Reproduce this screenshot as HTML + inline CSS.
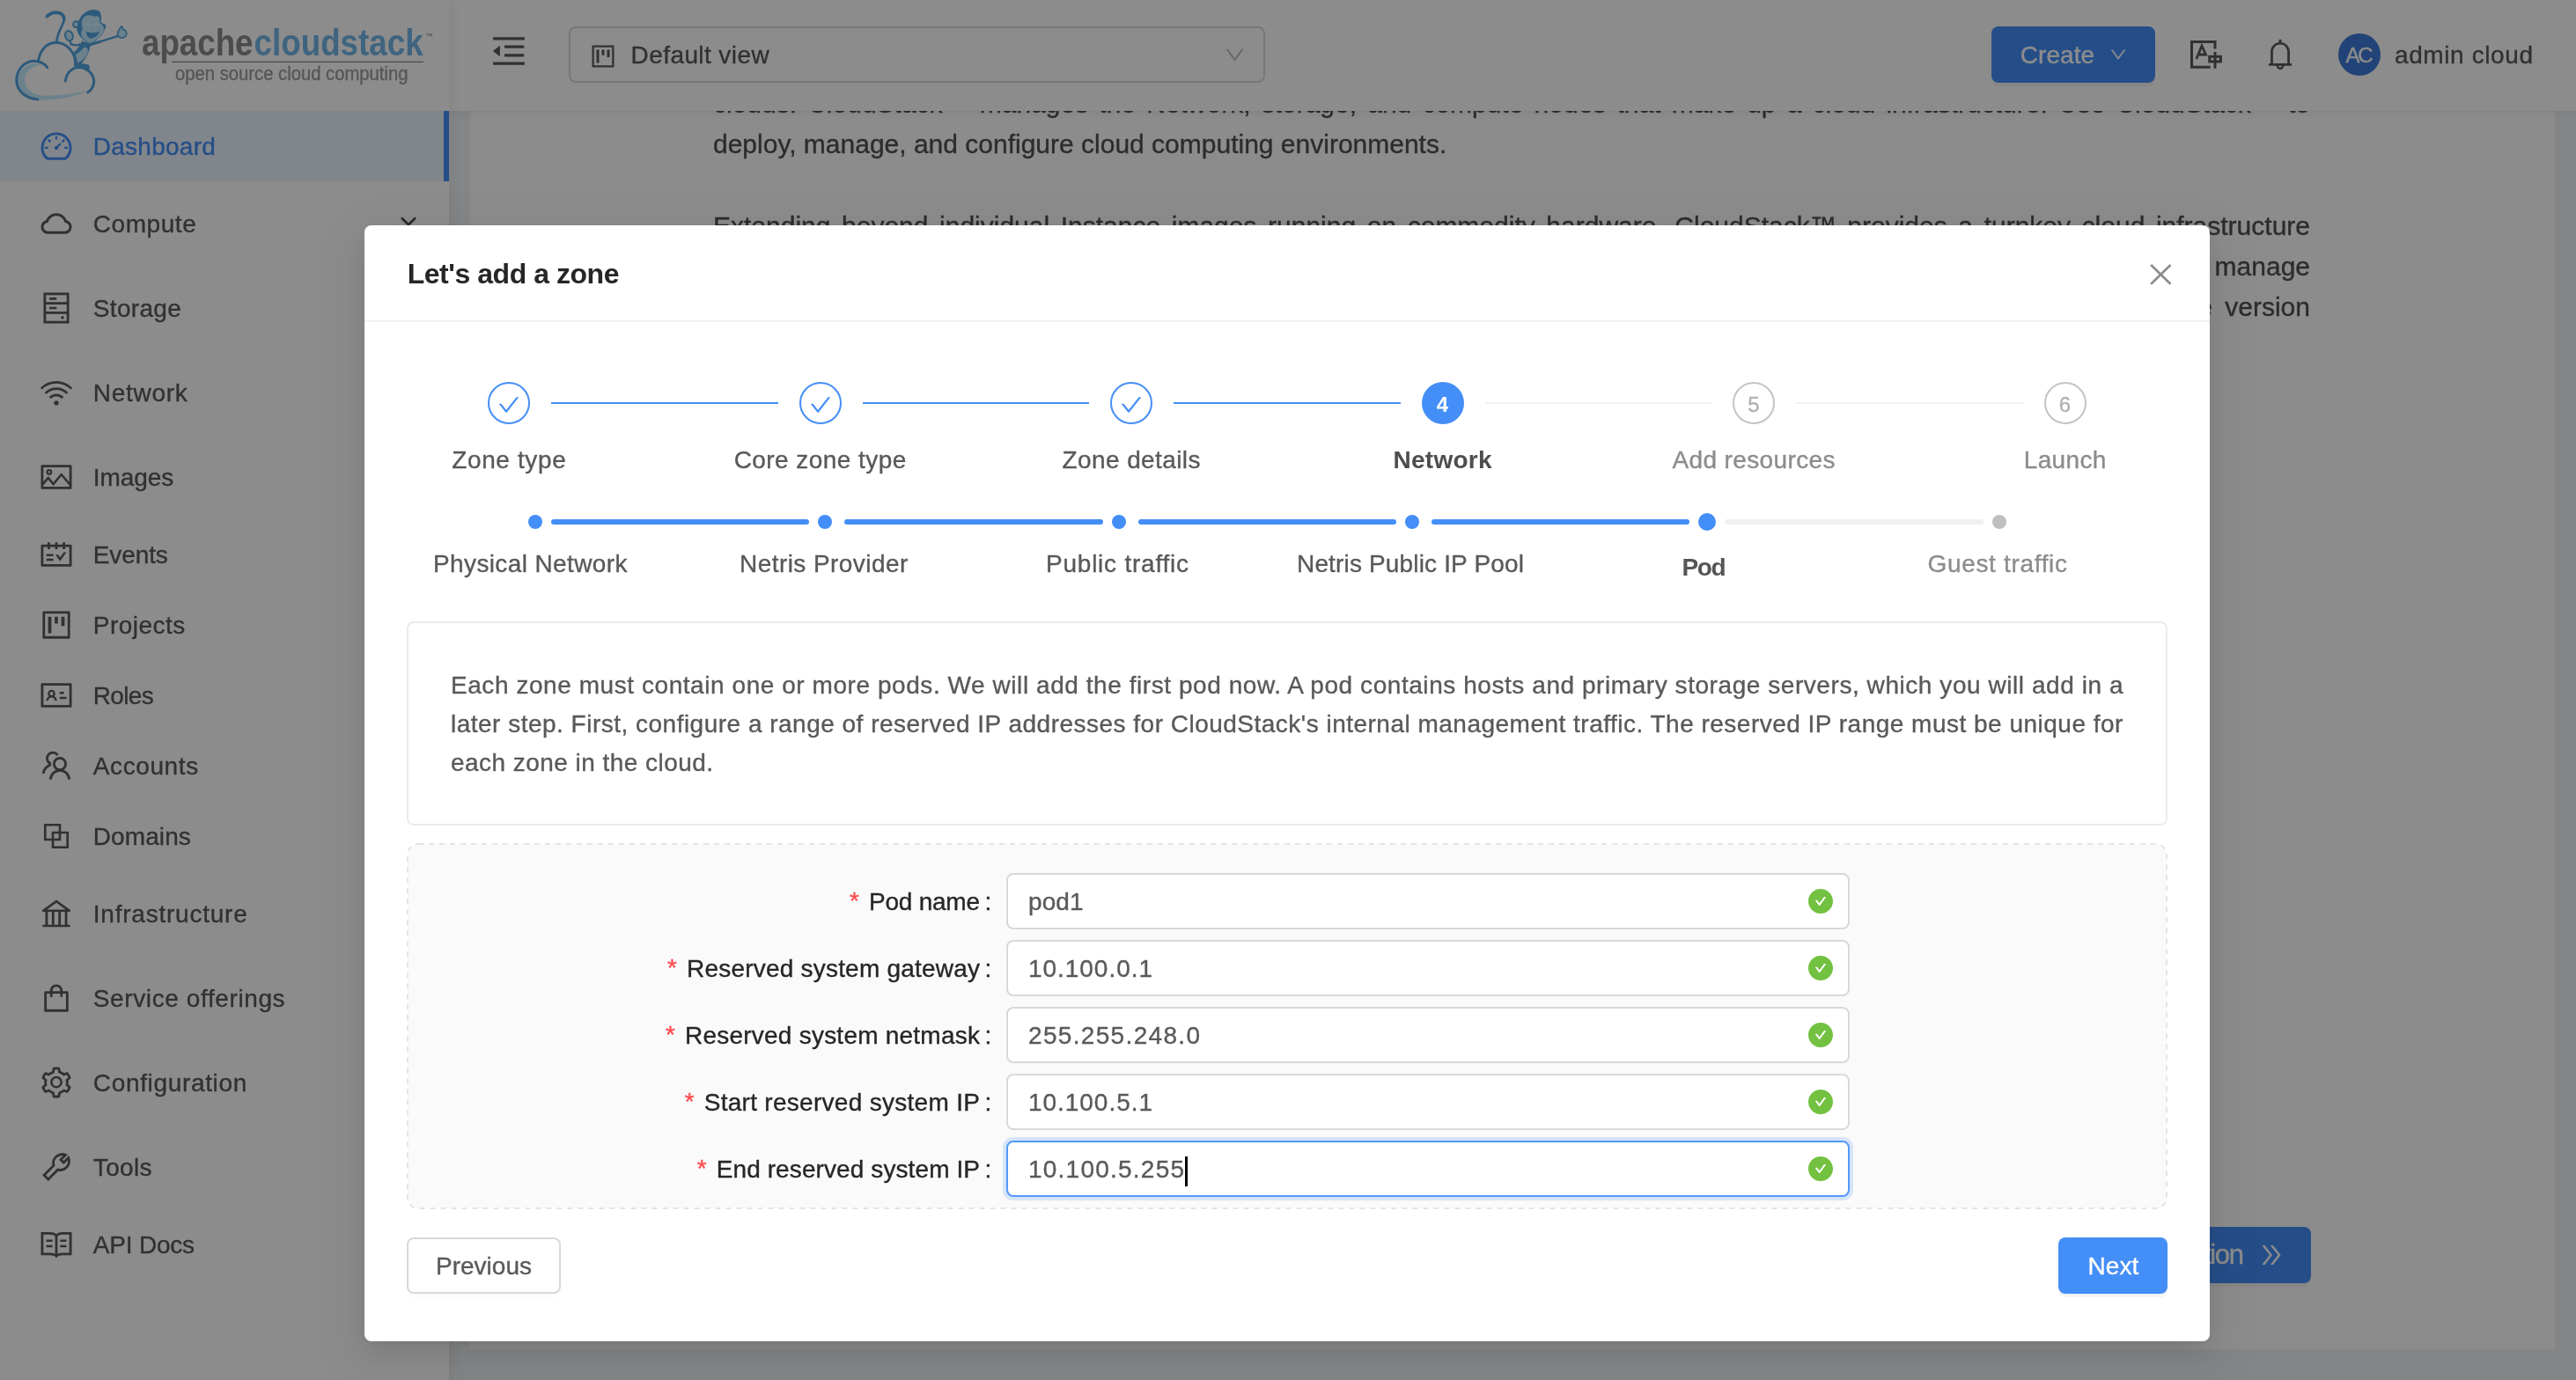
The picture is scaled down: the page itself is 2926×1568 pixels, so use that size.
<!DOCTYPE html>
<html lang="en"><head><meta charset="utf-8"><title>Apache CloudStack</title>
<style>

*{box-sizing:border-box}
html,body{margin:0;padding:0}
body{width:2926px;height:1568px;overflow:hidden;position:relative;background:#f0f2f5;font-family:"Liberation Sans",sans-serif;-webkit-font-smoothing:antialiased}
#app,#mask,#modal{position:absolute;left:0;top:0;width:2926px;height:1568px;overflow:hidden}
#mask{background:rgba(0,0,0,.45)}
#app,#modal{will-change:transform}
#app div,#app svg,#modal div,#modal svg{position:absolute}
.t{white-space:pre;-webkit-text-stroke:0.35px currentColor}
#content{left:534px;top:126px;width:2368px;height:1407px;background:#fff;overflow:hidden}
#content p{position:absolute;margin:0;left:276px;width:1814px;font-size:30px;line-height:46px;color:#505050;text-align:justify;-webkit-text-stroke:0.35px currentColor}
#content p span{font-size:24px}
#sider{left:0;top:0;width:510px;height:1568px;background:#fff;box-shadow:4px 0 12px rgba(29,35,41,.05)}
#header{left:510px;top:0;width:2416px;height:126px;background:#fff;box-shadow:0 2px 8px rgba(0,21,41,.08)}
#dlg{left:414px;top:256px;width:2096px;height:1268px;background:#fff;border-radius:8px;box-shadow:0 6px 12px -8px rgba(0,0,0,.12),0 12px 32px 0 rgba(0,0,0,.08),0 18px 56px 16px rgba(0,0,0,.05)}
.inp{background:#fff;border:2px solid #d9d9d9;border-radius:8px}

</style></head>
<body>
<div id="app">
<div id="content"><p style="top:-76.8px">CloudStack™ is a software platform that pools computing resources to build public, private, and hybrid Infrastructure as a Service (IaaS) clouds. CloudStack™ manages the Network, storage, and compute nodes that make up a cloud infrastructure. Use CloudStack™ to deploy, manage, and configure cloud computing environments.</p><p style="top:107.5px">Extending beyond individual Instance images running on commodity hardware, CloudStack™ provides a turnkey cloud infrastructure software stack for delivering virtual datacenters as a service - delivering all of the essential components to build, deploy, and manage multi-tier and multi-tenant cloud applications. Both open-source and Premium versions are available, with the open-source version offering nearly identical features.</p></div>
<div style="left:2160px;top:1394px;width:465px;height:64px;background:#448ef7;border-radius:8px;box-shadow:0 4px 0 rgba(0,0,0,.045)"></div>
<div class="t" style="left:2238.6px;top:1405.7px;font-size:31px;line-height:40px;color:#fff;letter-spacing:-1.30px;">Continue with installation</div>
<svg style="left:2564px;top:1410px" width="32" height="32" viewBox="0 0 1024 1024" ><path fill="#fff" d="M533.200 492.300L277.900 166.100c-3-3.900-7.700-6.100-12.600-6.100H188c-6.700 0-10.400 7.700-6.300 12.900L447.100 512 181.700 851.100A7.980 7.980 0 0 0 188 864h77.300c4.900 0 9.600-2.300 12.600-6.100l255.300-326.100c9.100-11.700 9.100-27.900 0-39.500zm304 0L581.900 166.100c-3-3.900-7.700-6.100-12.600-6.100H492c-6.700 0-10.400 7.700-6.300 12.900L751.100 512 485.700 851.100A7.980 7.980 0 0 0 492 864h77.300c4.900 0 9.600-2.300 12.600-6.100l255.300-326.100c9.100-11.700 9.100-27.900 0-39.500z"/></svg>
<div id="header"></div>
<div id="sider"></div>
<svg style="left:555px;top:35px" width="46" height="46" viewBox="0 0 1024 1024" ><path fill="#595959" d="M408 442h480c4.400 0 8-3.600 8-8v-56c0-4.400-3.600-8-8-8H408c-4.400 0-8 3.600-8 8v56c0 4.400 3.600 8 8 8zm-8 204c0 4.400 3.600 8 8 8h480c4.400 0 8-3.600 8-8v-56c0-4.400-3.600-8-8-8H408c-4.400 0-8 3.600-8 8v56zm504-486H120c-4.400 0-8 3.600-8 8v56c0 4.400 3.600 8 8 8h784c4.400 0 8-3.600 8-8v-56c0-4.400-3.600-8-8-8zm0 632H120c-4.400 0-8 3.600-8 8v56c0 4.400 3.600 8 8 8h784c4.400 0 8-3.600 8-8v-56c0-4.400-3.600-8-8-8zM115.400 518.900L271.700 642c5.800 4.600 14.400.500 14.400-6.900V388.900c0-7.400-8.500-11.500-14.400-6.900L115.400 505.100a8.740 8.740 0 0 0 0 13.800z"/></svg>
<div style="left:646px;top:30px;width:791px;height:64px;border:2px solid #d9d9d9;border-radius:8px;background:#fff"></div>
<svg style="left:668.5px;top:47.5px" width="32" height="32" viewBox="0 0 1024 1024" ><path fill="#595959" d="M280 752h80c4.400 0 8-3.600 8-8V280c0-4.400-3.600-8-8-8h-80c-4.400 0-8 3.600-8 8v464c0 4.400 3.600 8 8 8zm192-280h80c4.400 0 8-3.600 8-8V280c0-4.400-3.600-8-8-8h-80c-4.400 0-8 3.600-8 8v184c0 4.400 3.600 8 8 8zm192 72h80c4.400 0 8-3.600 8-8V280c0-4.400-3.600-8-8-8h-80c-4.400 0-8 3.600-8 8v256c0 4.400 3.600 8 8 8zm216-432H144c-17.700 0-32 14.300-32 32v736c0 17.700 14.300 32 32 32h736c17.700 0 32-14.300 32-32V144c0-17.700-14.300-32-32-32zm-40 728H184V184h656v656z"/></svg>
<div class="t" style="left:716.6px;top:45.3px;font-size:28px;line-height:36px;color:#595959;letter-spacing:0.41px;">Default view</div>
<svg style="left:1388.5px;top:48.5px" width="27" height="27" viewBox="0 0 1024 1024" ><path fill="#bfbfbf" d="M884 256h-75c-5.100 0-9.900 2.500-12.900 6.600L512 654.200 227.900 262.600c-3-4.100-7.700-6.600-12.900-6.600h-75c-6.500 0-10.300 7.400-6.500 12.700l352.600 486.100c12.800 17.600 39 17.600 51.700 0l352.600-486.100c3.900-5.300.100-12.700-6.400-12.700z"/></svg>
<div style="left:2262px;top:30px;width:186px;height:64px;background:#448ef7;border-radius:8px;box-shadow:0 4px 0 rgba(0,0,0,.045)"></div>
<div class="t" style="left:2294.7px;top:45.3px;font-size:28px;line-height:36px;color:#fff;letter-spacing:0.09px;">Create</div>
<svg style="left:2395px;top:50.6px" width="22" height="22" viewBox="0 0 1024 1024" ><path fill="#fff" d="M884 256h-75c-5.100 0-9.900 2.500-12.900 6.600L512 654.200 227.900 262.600c-3-4.100-7.700-6.600-12.900-6.600h-75c-6.500 0-10.300 7.400-6.500 12.700l352.600 486.100c12.800 17.600 39 17.600 51.700 0l352.600-486.100c3.900-5.300.100-12.700-6.400-12.700z"/></svg>
<svg style="left:2480px;top:40px" width="50" height="44" viewBox="2480 40 50 44" ><g fill="none" stroke="#595959" stroke-width="3"><path d="M2516 55.5V47.5H2489.5V76.3H2510.7"/><path d="M2494.8 67L2501 52L2505.5 62H2498" stroke-width="2.8"/><rect x="2509.7" y="64.3" width="12.7" height="5.6"/><path d="M2516 58.9V77.8"/></g></svg>
<svg style="left:2570px;top:42px" width="40" height="40" viewBox="0 0 1024 1024" ><path fill="#595959" d="M816 768h-24V428c0-141.100-104.300-257.700-240-277.100V112c0-22.100-17.900-40-40-40s-40 17.900-40 40v38.900c-135.700 19.400-240 136-240 277.100v340h-24c-17.700 0-32 14.300-32 32v32c0 4.400 3.600 8 8 8h216c0 61.800 50.200 112 112 112s112-50.200 112-112h216c4.400 0 8-3.600 8-8v-32c0-17.700-14.300-32-32-32zM512 888c-26.500 0-48-21.500-48-48h96c0 26.500-21.500 48-48 48zM304 768V428c0-55.600 21.600-107.800 60.900-147.100S456.400 220 512 220c55.600 0 107.800 21.600 147.100 60.900S720 372.400 720 428v340H304z"/></svg>
<div style="left:2656px;top:38px;width:48px;height:48px;background:#3f7ad9;border-radius:50%"></div>
<div class="t" style="left:2664.5px;top:47.2px;font-size:24px;line-height:31px;color:#fff;letter-spacing:-2.34px;">AC</div>
<div class="t" style="left:2720.0px;top:45.3px;font-size:28px;line-height:36px;color:#595959;letter-spacing:0.60px;">admin cloud</div>
<svg style="left:0;top:0" width="510" height="126" viewBox="0 0 510 126">
<g transform="translate(10,5) scale(0.08696)" fill="none" stroke="#52a4e1" stroke-width="34" stroke-linecap="round" stroke-linejoin="round">
  <!-- light swooshes -->
  <path d="M330 770C180 800 110 900 110 1010C120 1130 230 1230 390 1245C640 1260 880 1200 1010 1130C860 1170 620 1200 420 1190C280 1170 210 1080 205 980C210 880 290 800 430 790Z" fill="#c4ebff" stroke="none"/>
  <!-- cloud lobes -->
  <path d="M380 1242C210 1230 100 1120 100 990C105 850 200 745 330 740C410 745 470 780 503 825"/>
  <path d="M385 735C410 590 500 500 615 497C740 500 830 590 862 700C872 740 872 770 868 800"/>
  <path d="M740 1000C750 900 820 825 915 822C1020 825 1105 900 1112 1000C1110 1070 1080 1120 1030 1150"/>
  <!-- tail -->
  <path d="M625 490C630 380 690 300 715 230C735 150 690 105 610 105C560 108 530 130 497 155" stroke-width="31"/><path d="M722 200C725 135 680 105 610 105C560 108 530 130 499 155" stroke-width="42"/>
  <!-- body -->
  <path d="M960 485C1000 500 1040 500 1060 520C1060 600 1010 700 940 775L1040 790C1060 820 1050 850 1040 860L870 800C880 740 870 680 850 630C900 590 930 540 960 485Z" fill="#52a4e1" stroke-width="10"/>
  <path d="M985 560C1030 560 1040 590 1030 630C1010 690 960 740 905 765C885 720 880 680 872 655C920 630 950 600 985 560Z" fill="#c4ebff" stroke="none"/>
  <!-- arms -->
  <path d="M1060 528L1420 416" stroke-width="27"/><path d="M1060 528L1200 484" stroke-width="34"/>
  <path d="M935 522C890 538 840 532 812 520L800 480" stroke-width="28"/>
  <!-- waving hand -->
  <ellipse cx="787" cy="410" rx="50" ry="66" transform="rotate(-18 787 410)" fill="#c4ebff" stroke-width="22"/>
  <!-- thumbs-up hand -->
  <path d="M1465 292C1480 285 1492 300 1488 330C1530 330 1545 360 1535 395C1525 430 1490 442 1460 435C1425 425 1415 395 1425 365C1435 340 1450 320 1465 292Z" fill="#c4ebff" stroke-width="20"/>
  <!-- ears -->
  <circle cx="880" cy="262" r="40" fill="#c4ebff" stroke-width="22"/>
  <circle cx="1230" cy="290" r="28" fill="#c4ebff" stroke-width="20"/>
  <!-- head (hair) -->
  <path d="M1110 70C1170 72 1205 100 1204 140C1210 175 1205 210 1204 233C1235 250 1255 290 1250 330C1245 380 1200 420 1160 450C1130 490 1095 505 1069 503C1020 500 960 460 923 409C895 370 885 330 894 300C895 260 905 225 923 193C960 120 1030 72 1110 70Z" fill="#52a4e1" stroke="none"/>
  <!-- face -->
  <path d="M964 193C985 160 1020 140 1045 142C1075 140 1095 150 1116 160C1140 150 1165 152 1180 165C1190 190 1186 215 1186 235C1215 255 1240 285 1240 310C1245 345 1235 365 1225 380C1200 420 1160 445 1134 462C1110 490 1085 498 1064 496C1030 490 995 470 970 444C950 420 942 390 947 362C950 345 960 335 970 327C958 305 952 285 953 263C952 235 956 212 964 193Z" fill="#c4ebff" stroke="none"/>
  <!-- mouth -->
  <path d="M1011 350C1050 374 1140 380 1182 352C1178 400 1130 440 1075 446C1040 445 1012 410 1011 350Z" fill="#52a4e1" stroke="none"/>
  <!-- eyes, nose -->
  <path d="M999 274C1010 248 1052 246 1064 271M1110 271C1122 245 1163 245 1175 271" stroke="#fbffff" stroke-width="10"/>
  <path d="M1074 318h8M1109 318h8" stroke="#52a4e1" stroke-width="9" opacity=".7"/>
</g>

<text x="161" y="62.6" font-family="'Liberation Sans',sans-serif" font-weight="700" font-size="42" fill="#8a8a8a" textLength="126.5" lengthAdjust="spacingAndGlyphs">apache</text>
<text x="288.6" y="62.6" font-family="'Liberation Sans',sans-serif" font-weight="700" font-size="42" fill="#74b6e7" textLength="192" lengthAdjust="spacingAndGlyphs">cloudstack</text>
<text x="483.2" y="43.6" font-family="'Liberation Sans',sans-serif" font-size="8.6" fill="#8a8a8a">™</text>
<path d="M195 70.4H481" stroke="#8a8a8a" stroke-width="1.2"/>
<text x="199" y="90.8" font-family="'Liberation Sans',sans-serif" font-size="21.5" fill="#9c9c9c" stroke="#9c9c9c" stroke-width=".35" textLength="264.5" lengthAdjust="spacingAndGlyphs">open source cloud computing</text>
</svg>
<div style="left:0px;top:126px;width:510px;height:80px;background:#ebf4ff"></div>
<div style="left:504px;top:126px;width:6px;height:80px;background:#448ef7"></div>
<div class="t" style="left:105.8px;top:148.9px;font-size:28px;line-height:36px;color:#448ef7;letter-spacing:0.25px;">Dashboard</div>
<svg style="left:44px;top:146px" width="40" height="40" viewBox="0 0 1024 1024" ><path fill="#448ef7" d="M924.800 385.600a446.700 446.700 0 0 0-96-142.400 446.700 446.700 0 0 0-142.400-96C631.100 123.800 572.500 112 512 112s-119.100 11.800-174.400 35.200a446.700 446.700 0 0 0-142.400 96 446.700 446.700 0 0 0-96 142.400C75.800 440.900 64 499.500 64 560c0 132.700 58.300 257.700 159.900 343.100l1.700 1.400c5.800 4.800 13.100 7.500 20.600 7.500h531.700c7.500 0 14.800-2.700 20.600-7.500l1.700-1.400C901.700 817.700 960 692.700 960 560c0-60.500-11.900-119.100-35.200-174.400zM761.400 836H262.600A371.120 371.120 0 0 1 140 560c0-99.400 38.700-192.800 109-263 70.300-70.300 163.700-109 263-109 99.400 0 192.800 38.700 263 109 70.300 70.300 109 163.700 109 263 0 105.600-44.500 205.500-122.600 276zM623.500 421.500a8.030 8.030 0 0 0-11.300 0L527.700 506c-18.700-5-39.400-.200-54.100 14.500a55.950 55.950 0 0 0 0 79.200 55.950 55.950 0 0 0 79.200 0 55.870 55.870 0 0 0 14.500-54.100l84.500-84.500c3.100-3.100 3.100-8.200 0-11.300l-28.300-28.300zM490 320h44c4.400 0 8-3.600 8-8v-80c0-4.400-3.600-8-8-8h-44c-4.400 0-8 3.600-8 8v80c0 4.400 3.600 8 8 8zm260 218v44c0 4.400 3.600 8 8 8h80c4.400 0 8-3.600 8-8v-44c0-4.400-3.600-8-8-8h-80c-4.400 0-8 3.600-8 8zm12.700-197.200l-31.100-31.100a8.030 8.030 0 0 0-11.300 0l-56.600 56.600a8.030 8.030 0 0 0 0 11.300l31.100 31.100c3.100 3.100 8.200 3.100 11.300 0l56.600-56.600c3.100-3.100 3.100-8.200 0-11.300zm-458.600-31.100a8.030 8.030 0 0 0-11.300 0l-31.100 31.100a8.030 8.030 0 0 0 0 11.300l56.600 56.600c3.100 3.100 8.200 3.100 11.300 0l31.100-31.100c3.100-3.100 3.100-8.200 0-11.300l-56.600-56.600zM262 530h-80c-4.400 0-8 3.600-8 8v44c0 4.400 3.600 8 8 8h80c4.400 0 8-3.600 8-8v-44c0-4.400-3.600-8-8-8z"/></svg>
<div class="t" style="left:105.8px;top:236.9px;font-size:28px;line-height:36px;color:#595959;letter-spacing:0.56px;">Compute</div>
<svg style="left:44px;top:234px" width="40" height="40" viewBox="0 0 1024 1024" ><path fill="#595959" d="M811.400 418.700C765.600 297.900 648.900 212 512.200 212S258.800 297.800 213 418.600C127.300 441.100 64 519.100 64 612c0 110.500 89.500 200 199.900 200h496.200C870.500 812 960 722.500 960 612c0-92.700-63.100-170.700-148.600-193.300zm36.300 281a123.070 123.070 0 0 1-87.600 36.300H263.900c-33.100 0-64.200-12.900-87.600-36.300A123.300 123.300 0 0 1 140 612c0-28 9.100-54.300 26.200-76.300a125.700 125.700 0 0 1 66.100-43.700l37.900-9.900 13.900-36.600c8.600-22.800 20.600-44.100 35.700-63.400a245.600 245.600 0 0 1 52.400-49.900c41.100-28.900 89.500-44.200 140-44.200s98.900 15.300 140 44.200c19.900 14 37.500 30.800 52.400 49.900 15.100 19.300 27.100 40.700 35.700 63.400l13.800 36.500 37.800 10c54.300 14.500 92.100 63.800 92.100 120 0 33.100-12.900 64.300-36.300 87.700z"/></svg>
<div class="t" style="left:105.8px;top:332.9px;font-size:28px;line-height:36px;color:#595959;letter-spacing:0.32px;">Storage</div>
<svg style="left:44px;top:330px" width="40" height="40" viewBox="0 0 1024 1024" ><g fill="none" stroke="#595959" stroke-width="72" stroke-linejoin="miter"><rect x="176" y="100" width="672" height="824"/><path d="M176 376H848M176 650H848"/><path d="M310 238H520M310 512H520" stroke-width="68"/></g><circle cx="690" cy="790" r="46" fill="#595959"/></svg>
<div class="t" style="left:105.8px;top:428.9px;font-size:28px;line-height:36px;color:#595959;letter-spacing:0.72px;">Network</div>
<svg style="left:44px;top:426px" width="40" height="40" viewBox="0 0 1024 1024" ><g fill="none" stroke="#595959" stroke-width="72" stroke-linejoin="miter" stroke-linecap="butt"><path d="M70 400A620 620 0 0 1 954 400"/><path d="M195 535A440 440 0 0 1 829 535"/><path d="M325 665A260 260 0 0 1 699 665"/></g><circle cx="512" cy="815" r="68" fill="#595959"/></svg>
<div class="t" style="left:105.8px;top:524.9px;font-size:28px;line-height:36px;color:#595959;letter-spacing:-0.05px;">Images</div>
<svg style="left:44px;top:522px" width="40" height="40" viewBox="0 0 1024 1024" ><path fill="#595959" d="M928 160H96c-17.700 0-32 14.300-32 32v640c0 17.700 14.300 32 32 32h832c17.700 0 32-14.300 32-32V192c0-17.700-14.300-32-32-32zm-40 632H136v-39.900l138.500-164.300 150.100 178L658.100 489 888 761.600V792zm0-129.800L664.200 396.800c-3.200-3.800-9-3.800-12.200 0L424.600 666.400l-144-170.700c-3.200-3.800-9-3.800-12.200 0L136 652.700V232h752v430.200zM304 456a88 88 0 1 0 0-176 88 88 0 0 0 0 176zm0-116c15.500 0 28 12.500 28 28s-12.500 28-28 28-28-12.500-28-28 12.500-28 28-28z"/></svg>
<div class="t" style="left:105.8px;top:612.9px;font-size:28px;line-height:36px;color:#595959;letter-spacing:-0.12px;">Events</div>
<svg style="left:44px;top:610px" width="40" height="40" viewBox="0 0 1024 1024" ><path fill="#595959" d="M928 224H768v-56c0-4.400-3.600-8-8-8h-56c-4.400 0-8 3.600-8 8v56H548v-56c0-4.400-3.600-8-8-8h-56c-4.400 0-8 3.600-8 8v56H328v-56c0-4.400-3.600-8-8-8h-56c-4.400 0-8 3.600-8 8v56H96c-17.700 0-32 14.300-32 32v576c0 17.700 14.300 32 32 32h832c17.700 0 32-14.300 32-32V256c0-17.700-14.300-32-32-32zm-40 568H136V296h120v56c0 4.400 3.600 8 8 8h56c4.400 0 8-3.600 8-8v-56h148v56c0 4.400 3.600 8 8 8h56c4.400 0 8-3.600 8-8v-56h148v56c0 4.400 3.600 8 8 8h56c4.400 0 8-3.600 8-8v-56h120v496zM416 496H232c-4.400 0-8 3.600-8 8v48c0 4.400 3.600 8 8 8h184c4.400 0 8-3.600 8-8v-48c0-4.400-3.600-8-8-8zm0 136H232c-4.400 0-8 3.600-8 8v48c0 4.400 3.600 8 8 8h184c4.400 0 8-3.600 8-8v-48c0-4.400-3.600-8-8-8zm308.200-177.400L620.600 598.300l-52.800-73.100c-3-4.200-7.800-6.600-12.900-6.600H500c-6.500 0-10.300 7.400-6.500 12.700l114.100 158.200a15.900 15.900 0 0 0 25.800 0l165-228.700c3.800-5.300 0-12.700-6.500-12.700H737c-5-.1-9.800 2.400-12.800 6.500z"/></svg>
<div class="t" style="left:105.8px;top:692.9px;font-size:28px;line-height:36px;color:#595959;letter-spacing:0.46px;">Projects</div>
<svg style="left:44px;top:690px" width="40" height="40" viewBox="0 0 1024 1024" ><path fill="#595959" d="M280 752h80c4.400 0 8-3.600 8-8V280c0-4.400-3.600-8-8-8h-80c-4.400 0-8 3.600-8 8v464c0 4.400 3.600 8 8 8zm192-280h80c4.400 0 8-3.600 8-8V280c0-4.400-3.600-8-8-8h-80c-4.400 0-8 3.600-8 8v184c0 4.400 3.600 8 8 8zm192 72h80c4.400 0 8-3.600 8-8V280c0-4.400-3.600-8-8-8h-80c-4.400 0-8 3.600-8 8v256c0 4.400 3.600 8 8 8zm216-432H144c-17.700 0-32 14.300-32 32v736c0 17.700 14.300 32 32 32h736c17.700 0 32-14.300 32-32V144c0-17.700-14.300-32-32-32zm-40 728H184V184h656v656z"/></svg>
<div class="t" style="left:105.8px;top:772.9px;font-size:28px;line-height:36px;color:#595959;letter-spacing:-0.65px;">Roles</div>
<svg style="left:44px;top:770px" width="40" height="40" viewBox="0 0 1024 1024" ><path fill="#595959" d="M928 160H96c-17.700 0-32 14.300-32 32v640c0 17.700 14.300 32 32 32h832c17.700 0 32-14.300 32-32V192c0-17.700-14.300-32-32-32zm-40 632H136V232h752v560zM610.300 476h123.400c1.300 0 2.300-3.600 2.300-8v-48c0-4.400-1-8-2.300-8H610.300c-1.300 0-2.300 3.600-2.300 8v48c0 4.400 1 8 2.300 8zm4.800 144h185.700c3.900 0 7.100-3.600 7.100-8v-48c0-4.400-3.200-8-7.100-8H615.100c-3.900 0-7.100 3.600-7.100 8v48c0 4.400 3.200 8 7.100 8zM224 673h43.900c4.200 0 7.600-3.300 7.900-7.500 3.800-50.500 46-90.500 97.200-90.500s93.400 40 97.200 90.500c.3 4.200 3.700 7.500 7.900 7.500H522a8 8 0 0 0 8-8.400c-2.800-53.300-32-99.700-74.600-126.100a111.800 111.800 0 0 0 29.100-75.500c0-61.900-49.900-112-111.400-112s-111.400 50.100-111.400 112c0 29.100 11 55.500 29.100 75.500a158.090 158.090 0 0 0-74.600 126.100c-.4 4.600 3.200 8.400 7.800 8.400zm149-262c28.500 0 51.700 23.300 51.700 52s-23.200 52-51.700 52-51.700-23.300-51.700-52 23.200-52 51.700-52z"/></svg>
<div class="t" style="left:105.8px;top:852.9px;font-size:28px;line-height:36px;color:#595959;letter-spacing:0.60px;">Accounts</div>
<svg style="left:44px;top:850px" width="40" height="40" viewBox="0 0 1024 1024" ><g fill="none" stroke="#595959" stroke-width="72" stroke-linejoin="miter"><circle cx="614" cy="461" r="169"/><path d="M343 912C350 760 470 648 614 648S880 760 888 912"/><path d="M547 204A167 167 0 1 0 353 457"/><path d="M356 480C240 520 150 620 131 740"/></g></svg>
<div class="t" style="left:105.8px;top:932.9px;font-size:28px;line-height:36px;color:#595959;letter-spacing:0.09px;">Domains</div>
<svg style="left:44px;top:930px" width="40" height="40" viewBox="0 0 1024 1024" ><path fill="#595959" d="M856 376H648V168c0-8.800-7.200-16-16-16H168c-8.800 0-16 7.200-16 16v464c0 8.800 7.200 16 16 16h208v208c0 8.800 7.200 16 16 16h464c8.800 0 16-7.200 16-16V392c0-8.800-7.200-16-16-16zm-480 16v188H220V220h360v156H392c-8.800 0-16 7.200-16 16zm204 52v136H444V444h136zm224 360H444V648h188c8.800 0 16-7.200 16-16V444h156v360z"/></svg>
<div class="t" style="left:105.8px;top:1020.9px;font-size:28px;line-height:36px;color:#595959;letter-spacing:0.77px;">Infrastructure</div>
<svg style="left:44px;top:1018px" width="40" height="40" viewBox="0 0 1024 1024" ><path fill="#595959" d="M894 462c30.900 0 43.800-39.700 18.700-58L530.800 126.200a31.810 31.810 0 0 0-37.600 0L111.300 404c-25.100 18.200-12.200 58 18.800 58H192v374h-72c-4.400 0-8 3.600-8 8v52c0 4.400 3.600 8 8 8h784c4.400 0 8-3.600 8-8v-52c0-4.400-3.600-8-8-8h-72V462h62zM512 196.700l271.100 197.200H240.900L512 196.700zM264 462h117v374H264V462zm189 0h117v374H453V462zm307 374H642V462h118v374z"/></svg>
<div class="t" style="left:105.8px;top:1116.9px;font-size:28px;line-height:36px;color:#595959;letter-spacing:0.61px;">Service offerings</div>
<svg style="left:44px;top:1114px" width="40" height="40" viewBox="0 0 1024 1024" ><path fill="#595959" d="M832 312H696v-16c0-101.600-82.400-184-184-184s-184 82.400-184 184v16H192c-17.700 0-32 14.300-32 32v536c0 17.700 14.300 32 32 32h640c17.700 0 32-14.300 32-32V344c0-17.700-14.300-32-32-32zm-432-16c0-61.900 50.100-112 112-112s112 50.100 112 112v16H400v-16zm392 544H232V384h96v88c0 4.400 3.600 8 8 8h56c4.400 0 8-3.600 8-8v-88h224v88c0 4.400 3.600 8 8 8h56c4.400 0 8-3.600 8-8v-88h96v456z"/></svg>
<div class="t" style="left:105.8px;top:1212.9px;font-size:28px;line-height:36px;color:#595959;letter-spacing:0.66px;">Configuration</div>
<svg style="left:44px;top:1210px" width="40" height="40" viewBox="0 0 1024 1024" ><path fill="#595959" d="M924.800 625.700l-65.500-56c3.100-19 4.700-38.400 4.700-57.800s-1.600-38.800-4.700-57.800l65.500-56a32.030 32.030 0 0 0 9.300-35.200l-.9-2.600a442.270 442.270 0 0 0-79.700-137.900l-1.800-2.100a32.120 32.120 0 0 0-35.100-9.500l-81.300 28.900c-30-24.600-63.500-44-99.700-57.600l-15.700-85a32.050 32.050 0 0 0-25.800-25.700l-2.700-.5c-52.100-9.400-106.900-9.400-159 0l-2.700.5a32.050 32.050 0 0 0-25.800 25.700l-15.800 85.400a351.860 351.860 0 0 0-99 57.400l-81.900-29.100a32 32 0 0 0-35.100 9.500l-1.800 2.100a446.020 446.020 0 0 0-79.700 137.900l-.9 2.600c-4.500 12.500-.8 26.500 9.300 35.200l66.300 56.600c-3.100 18.800-4.600 38-4.600 57.100 0 19.200 1.500 38.400 4.600 57.100L99 625.500a32.030 32.030 0 0 0-9.300 35.200l.9 2.600c18.100 50.400 44.900 96.900 79.700 137.900l1.800 2.100a32.120 32.120 0 0 0 35.100 9.500l81.900-29.100c29.800 24.500 63.100 43.900 99 57.400l15.800 85.400a32.050 32.050 0 0 0 25.800 25.700l2.700.5a449.400 449.400 0 0 0 159 0l2.700-.5a32.050 32.050 0 0 0 25.800-25.700l15.700-85a350 350 0 0 0 99.700-57.600l81.300 28.900a32 32 0 0 0 35.100-9.500l1.800-2.100c34.800-41.100 61.600-87.500 79.700-137.900l.9-2.600c4.500-12.300.8-26.300-9.300-35zM788.300 465.900c2.500 15.100 3.800 30.600 3.800 46.100s-1.300 31-3.800 46.100l-6.600 40.100 74.700 63.900a370.030 370.030 0 0 1-42.600 73.600L721 702.800l-31.400 25.800c-23.900 19.600-50.500 35-79.300 45.800l-38.100 14.300-17.900 97a377.500 377.500 0 0 1-85 0l-17.900-97.200-37.800-14.500c-28.500-10.800-55-26.200-78.700-45.700l-31.400-25.900-93.400 33.200c-17-22.900-31.200-47.600-42.600-73.600l75.500-64.500-6.500-40c-2.400-14.900-3.700-30.300-3.700-45.500 0-15.300 1.200-30.600 3.700-45.500l6.500-40-75.500-64.500c11.300-26.100 25.600-50.700 42.600-73.600l93.400 33.200 31.400-25.900c23.700-19.500 50.200-34.900 78.700-45.700l37.900-14.300 17.900-97.200c28.100-3.200 56.800-3.200 85 0l17.900 97 38.100 14.300c28.700 10.800 55.400 26.200 79.300 45.800l31.400 25.800 92.800-32.900c17 22.900 31.200 47.600 42.600 73.600L781.800 426l6.500 39.900zM512 326c-97.200 0-176 78.800-176 176s78.800 176 176 176 176-78.800 176-176-78.800-176-176-176zm79.200 255.200A111.600 111.600 0 0 1 512 614c-29.900 0-58-11.700-79.200-32.800A111.600 111.600 0 0 1 400 502c0-29.900 11.700-58 32.800-79.200C454 401.600 482.100 390 512 390c29.900 0 58 11.600 79.200 32.800A111.600 111.600 0 0 1 624 502c0 29.900-11.700 58-32.800 79.200z"/></svg>
<div class="t" style="left:105.8px;top:1308.9px;font-size:28px;line-height:36px;color:#595959;letter-spacing:0.33px;">Tools</div>
<svg style="left:44px;top:1306px" width="40" height="40" viewBox="0 0 1024 1024" ><g fill="none" stroke="#595959" stroke-width="72" stroke-linejoin="miter" stroke-linejoin="round"><path d="M156 746L436 466C402 372 440 270 520 200C600 140 700 130 780 160L640 300L724 384L864 244C894 324 884 424 824 504C754 584 652 622 558 588L278 868Z"/></g></svg>
<div class="t" style="left:105.8px;top:1396.9px;font-size:28px;line-height:36px;color:#595959;letter-spacing:-0.20px;">API Docs</div>
<svg style="left:44px;top:1394px" width="40" height="40" viewBox="0 0 1024 1024" ><g fill="none" stroke="#595959" stroke-width="72" stroke-linejoin="miter"><path d="M100 190H330C420 190 480 215 512 262C544 215 604 190 694 190H924V790H694C604 790 544 808 512 850C480 808 420 790 330 790H100Z"/><path d="M512 262V850"/><path d="M220 400H400M220 560H400M624 400H804M624 560H804" stroke-width="64"/></g></svg>
<svg style="left:450px;top:240px" width="28" height="24" viewBox="450 240 28 24" ><path d="M456.8 248.2L464 255.3L471.2 248.2" fill="none" stroke="#4a4a4a" stroke-width="2.6" stroke-linecap="round" stroke-linejoin="round"/></svg>
</div>
<div id="mask"></div>
<div id="modal">
<div id="dlg"></div>
<div class="t" style="left:462.7px;top:289.9px;font-size:32px;line-height:42px;color:#262626;font-weight:700;-webkit-text-stroke:0;letter-spacing:-0.46px;">Let's add a zone</div>
<div style="left:414px;top:364px;width:2096px;height:2px;background:#f0f0f0"></div>
<svg style="left:2438px;top:296px" width="32" height="32" viewBox="2438 296 32 32" ><path d="M2443.2 301L2465.5 322.8M2465.5 301L2443.2 322.8" stroke="#8c8c8c" stroke-width="2.7" fill="none"/></svg>
<div style="left:626px;top:457px;width:257.5px;height:2px;background:#448ef7"></div>
<div style="left:554px;top:434px;width:48px;height:48px;border:2px solid #448ef7;border-radius:50%;background:#fff"></div>
<svg style="left:564px;top:446px" width="28" height="28" viewBox="0 0 1024 1024" ><path fill="#448ef7" d="M912 190h-69.900c-9.800 0-19.100 4.500-25.100 12.200L404.700 724.500 207 474a32 32 0 0 0-25.100-12.200H112c-6.700 0-10.400 7.700-6.300 12.900l273.900 347c12.800 16.200 37.400 16.200 50.300 0l488.400-618.900c4.100-5.100.400-12.800-6.300-12.800z"/></svg>
<div class="t" style="left:513.3px;top:504.8px;font-size:28px;line-height:36px;color:#595959;letter-spacing:0.61px;">Zone type</div>
<div style="left:979.5px;top:457px;width:257.5px;height:2px;background:#448ef7"></div>
<div style="left:907.5px;top:434px;width:48px;height:48px;border:2px solid #448ef7;border-radius:50%;background:#fff"></div>
<svg style="left:917.5px;top:446px" width="28" height="28" viewBox="0 0 1024 1024" ><path fill="#448ef7" d="M912 190h-69.900c-9.800 0-19.100 4.500-25.100 12.200L404.700 724.500 207 474a32 32 0 0 0-25.100-12.200H112c-6.700 0-10.400 7.700-6.300 12.900l273.900 347c12.800 16.200 37.400 16.200 50.300 0l488.400-618.900c4.100-5.100.400-12.800-6.300-12.800z"/></svg>
<div class="t" style="left:833.7px;top:504.8px;font-size:28px;line-height:36px;color:#595959;letter-spacing:0.44px;">Core zone type</div>
<div style="left:1333px;top:457px;width:257.5px;height:2px;background:#448ef7"></div>
<div style="left:1261px;top:434px;width:48px;height:48px;border:2px solid #448ef7;border-radius:50%;background:#fff"></div>
<svg style="left:1271px;top:446px" width="28" height="28" viewBox="0 0 1024 1024" ><path fill="#448ef7" d="M912 190h-69.900c-9.800 0-19.100 4.500-25.100 12.200L404.700 724.500 207 474a32 32 0 0 0-25.100-12.200H112c-6.700 0-10.400 7.700-6.300 12.900l273.900 347c12.800 16.200 37.400 16.200 50.300 0l488.400-618.900c4.100-5.100.400-12.800-6.300-12.800z"/></svg>
<div class="t" style="left:1206.6px;top:504.8px;font-size:28px;line-height:36px;color:#595959;letter-spacing:0.39px;">Zone details</div>
<div style="left:1686.5px;top:457px;width:257.5px;height:2px;background:#f0f0f0"></div>
<div style="left:1614.5px;top:434px;width:48px;height:48px;border-radius:50%;background:#448ef7"></div>
<div class="t" style="left:1631.8px;top:443.8px;font-size:24px;line-height:31px;color:#fff;font-weight:700;-webkit-text-stroke:0;">4</div>
<div class="t" style="left:1582.5px;top:504.8px;font-size:28px;line-height:36px;color:#4d4d4d;font-weight:700;-webkit-text-stroke:0;letter-spacing:0.26px;">Network</div>
<div style="left:2040px;top:457px;width:257.5px;height:2px;background:#f0f0f0"></div>
<div style="left:1968px;top:434px;width:48px;height:48px;border:2px solid #c4c4c4;border-radius:50%;background:#fff"></div>
<div class="t" style="left:1985.3px;top:443.8px;font-size:24px;line-height:31px;color:#b0b0b0;">5</div>
<div class="t" style="left:1899.5px;top:504.8px;font-size:28px;line-height:36px;color:#8c8c8c;letter-spacing:0.37px;">Add resources</div>
<div style="left:2321.5px;top:434px;width:48px;height:48px;border:2px solid #c4c4c4;border-radius:50%;background:#fff"></div>
<div class="t" style="left:2338.8px;top:443.8px;font-size:24px;line-height:31px;color:#b0b0b0;">6</div>
<div class="t" style="left:2298.8px;top:504.8px;font-size:28px;line-height:36px;color:#8c8c8c;letter-spacing:0.33px;">Launch</div>
<div style="left:626.0px;top:590px;width:293.3px;height:6px;border-radius:3px;background:#448ef7"></div>
<div style="left:959.3px;top:590px;width:293.3px;height:6px;border-radius:3px;background:#448ef7"></div>
<div style="left:1292.7px;top:590px;width:293.3px;height:6px;border-radius:3px;background:#448ef7"></div>
<div style="left:1626.0px;top:590px;width:293.3px;height:6px;border-radius:3px;background:#448ef7"></div>
<div style="left:1959.3px;top:590px;width:293.3px;height:6px;border-radius:3px;background:#f0f0f0"></div>
<div style="left:600px;top:585px;width:16px;height:16px;border-radius:50%;background:#448ef7"></div>
<div style="left:929px;top:585px;width:16px;height:16px;border-radius:50%;background:#448ef7"></div>
<div style="left:1263px;top:585px;width:16px;height:16px;border-radius:50%;background:#448ef7"></div>
<div style="left:1596px;top:585px;width:16px;height:16px;border-radius:50%;background:#448ef7"></div>
<div style="left:1929px;top:583px;width:20px;height:20px;border-radius:50%;background:#448ef7"></div>
<div style="left:2263px;top:585px;width:16px;height:16px;border-radius:50%;background:#bfbfbf"></div>
<div class="t" style="left:492.0px;top:623.3px;font-size:28px;line-height:36px;color:#595959;letter-spacing:0.38px;">Physical Network</div>
<div class="t" style="left:840.0px;top:623.3px;font-size:28px;line-height:36px;color:#595959;letter-spacing:0.44px;">Netris Provider</div>
<div class="t" style="left:1188.0px;top:623.3px;font-size:28px;line-height:36px;color:#595959;letter-spacing:0.77px;">Public traffic</div>
<div class="t" style="left:1473.0px;top:623.3px;font-size:28px;line-height:36px;color:#595959;letter-spacing:0.16px;">Netris Public IP Pool</div>
<div class="t" style="left:1910.5px;top:627.3px;font-size:28px;line-height:36px;color:#555;font-weight:700;-webkit-text-stroke:0;letter-spacing:-1.45px;">Pod</div>
<div class="t" style="left:2189.5px;top:623.3px;font-size:28px;line-height:36px;color:#8c8c8c;letter-spacing:0.67px;">Guest traffic</div>
<div style="left:462px;top:706px;width:2000px;height:232px;border:2px solid #ebebeb;border-radius:8px;background:#fff"></div>
<div class="t" style="left:512.0px;top:761.3px;font-size:28px;line-height:36px;color:#595959;letter-spacing:0.56px;">Each zone must contain one or more pods. We will add the first pod now. A pod contains hosts and primary storage servers, which you will add in a</div>
<div class="t" style="left:512.0px;top:805.3px;font-size:28px;line-height:36px;color:#595959;letter-spacing:0.49px;">later step. First, configure a range of reserved IP addresses for CloudStack's internal management traffic. The reserved IP range must be unique for</div>
<div class="t" style="left:512.0px;top:849.3px;font-size:28px;line-height:36px;color:#595959;letter-spacing:0.46px;">each zone in the cloud.</div>
<svg style="left:462px;top:958px" width="2000" height="416" viewBox="0 0 2000 416" ><rect x="1" y="1" width="1998" height="414" rx="12" fill="#fafafa" stroke="#e4e4e4" stroke-width="2" stroke-dasharray="6 6"/></svg>
<div style="left:1143px;top:992px;width:958px;height:64px;background:#fff;border:2px solid #d9d9d9;border-radius:8px"></div>
<div class="t" style="left:1168.0px;top:1007.3px;font-size:28px;line-height:36px;color:#595959;letter-spacing:0.07px;">pod1</div>
<svg style="left:2052px;top:1008px" width="32" height="32" viewBox="0 0 1024 1024" ><path fill="#72c140" d="M512 64C264.600 64 64 264.600 64 512s200.600 448 448 448 448-200.600 448-448S759.400 64 512 64zm193.500 301.700l-210.600 292a31.800 31.800 0 0 1-51.700 0L318.500 484.900c-3.800-5.300 0-12.700 6.500-12.700h46.900c10.200 0 19.900 4.900 25.900 13.300l71.200 98.800 157.200-218c6-8.300 15.600-13.300 25.900-13.300H699c6.500 0 10.300 7.400 6.500 12.700z"/></svg>
<div class="t" style="left:987.0px;top:1007.3px;font-size:28px;line-height:36px;color:#262626;letter-spacing:-0.23px;">Pod name</div>
<div class="t" style="left:1118.5px;top:1007.3px;font-size:28px;line-height:36px;color:#262626;">:</div>
<div class="t" style="left:965.0px;top:1006.3px;font-size:28px;line-height:36px;color:#ff4d4f;font-family:"DejaVu Sans",sans-serif;font-size:24px;">*</div>
<div style="left:1143px;top:1068px;width:958px;height:64px;background:#fff;border:2px solid #d9d9d9;border-radius:8px"></div>
<div class="t" style="left:1168.0px;top:1083.3px;font-size:28px;line-height:36px;color:#595959;letter-spacing:0.96px;">10.100.0.1</div>
<svg style="left:2052px;top:1084px" width="32" height="32" viewBox="0 0 1024 1024" ><path fill="#72c140" d="M512 64C264.600 64 64 264.600 64 512s200.600 448 448 448 448-200.600 448-448S759.400 64 512 64zm193.500 301.700l-210.600 292a31.800 31.800 0 0 1-51.700 0L318.500 484.900c-3.800-5.300 0-12.700 6.500-12.700h46.900c10.200 0 19.900 4.900 25.900 13.300l71.200 98.800 157.200-218c6-8.300 15.600-13.300 25.900-13.300H699c6.500 0 10.300 7.400 6.500 12.700z"/></svg>
<div class="t" style="left:780.0px;top:1083.3px;font-size:28px;line-height:36px;color:#262626;letter-spacing:0.21px;">Reserved system gateway</div>
<div class="t" style="left:1118.5px;top:1083.3px;font-size:28px;line-height:36px;color:#262626;">:</div>
<div class="t" style="left:758.0px;top:1082.3px;font-size:28px;line-height:36px;color:#ff4d4f;font-family:"DejaVu Sans",sans-serif;font-size:24px;">*</div>
<div style="left:1143px;top:1144px;width:958px;height:64px;background:#fff;border:2px solid #d9d9d9;border-radius:8px"></div>
<div class="t" style="left:1168.0px;top:1159.3px;font-size:28px;line-height:36px;color:#595959;letter-spacing:1.33px;">255.255.248.0</div>
<svg style="left:2052px;top:1160px" width="32" height="32" viewBox="0 0 1024 1024" ><path fill="#72c140" d="M512 64C264.600 64 64 264.600 64 512s200.600 448 448 448 448-200.600 448-448S759.400 64 512 64zm193.500 301.700l-210.600 292a31.800 31.800 0 0 1-51.700 0L318.500 484.900c-3.800-5.300 0-12.700 6.500-12.700h46.900c10.200 0 19.900 4.900 25.900 13.300l71.200 98.800 157.200-218c6-8.300 15.600-13.300 25.900-13.300H699c6.500 0 10.300 7.400 6.500 12.700z"/></svg>
<div class="t" style="left:778.0px;top:1159.3px;font-size:28px;line-height:36px;color:#262626;letter-spacing:0.23px;">Reserved system netmask</div>
<div class="t" style="left:1118.5px;top:1159.3px;font-size:28px;line-height:36px;color:#262626;">:</div>
<div class="t" style="left:756.0px;top:1158.3px;font-size:28px;line-height:36px;color:#ff4d4f;font-family:"DejaVu Sans",sans-serif;font-size:24px;">*</div>
<div style="left:1143px;top:1220px;width:958px;height:64px;background:#fff;border:2px solid #d9d9d9;border-radius:8px"></div>
<div class="t" style="left:1168.0px;top:1235.3px;font-size:28px;line-height:36px;color:#595959;letter-spacing:0.96px;">10.100.5.1</div>
<svg style="left:2052px;top:1236px" width="32" height="32" viewBox="0 0 1024 1024" ><path fill="#72c140" d="M512 64C264.600 64 64 264.600 64 512s200.600 448 448 448 448-200.600 448-448S759.400 64 512 64zm193.500 301.700l-210.600 292a31.800 31.800 0 0 1-51.700 0L318.500 484.900c-3.800-5.300 0-12.700 6.500-12.700h46.900c10.200 0 19.900 4.900 25.900 13.300l71.200 98.800 157.200-218c6-8.300 15.600-13.300 25.900-13.300H699c6.500 0 10.300 7.400 6.500 12.700z"/></svg>
<div class="t" style="left:799.7px;top:1235.3px;font-size:28px;line-height:36px;color:#262626;letter-spacing:0.29px;">Start reserved system IP</div>
<div class="t" style="left:1118.5px;top:1235.3px;font-size:28px;line-height:36px;color:#262626;">:</div>
<div class="t" style="left:777.7px;top:1234.3px;font-size:28px;line-height:36px;color:#ff4d4f;font-family:"DejaVu Sans",sans-serif;font-size:24px;">*</div>
<div style="left:1143px;top:1296px;width:958px;height:64px;background:#fff;border:2px solid #5299f7;border-radius:8px;box-shadow:0 0 0 4px rgba(68,142,247,.2)"></div>
<div style="left:1345.5px;top:1314px;width:3px;height:34px;background:#000"></div>
<div class="t" style="left:1168.0px;top:1311.3px;font-size:28px;line-height:36px;color:#595959;letter-spacing:1.23px;">10.100.5.255</div>
<svg style="left:2052px;top:1312px" width="32" height="32" viewBox="0 0 1024 1024" ><path fill="#72c140" d="M512 64C264.600 64 64 264.600 64 512s200.600 448 448 448 448-200.600 448-448S759.400 64 512 64zm193.500 301.700l-210.600 292a31.800 31.800 0 0 1-51.700 0L318.500 484.900c-3.800-5.300 0-12.700 6.500-12.700h46.900c10.200 0 19.900 4.900 25.900 13.300l71.200 98.800 157.200-218c6-8.300 15.600-13.300 25.900-13.300H699c6.500 0 10.300 7.400 6.500 12.700z"/></svg>
<div class="t" style="left:813.7px;top:1311.3px;font-size:28px;line-height:36px;color:#262626;letter-spacing:0.10px;">End reserved system IP</div>
<div class="t" style="left:1118.5px;top:1311.3px;font-size:28px;line-height:36px;color:#262626;">:</div>
<div class="t" style="left:791.7px;top:1310.3px;font-size:28px;line-height:36px;color:#ff4d4f;font-family:"DejaVu Sans",sans-serif;font-size:24px;">*</div>
<div style="left:462px;top:1406px;width:175px;height:64px;border:2px solid #d9d9d9;border-radius:8px;background:#fff;box-shadow:0 4px 0 rgba(0,0,0,.015)"></div>
<div class="t" style="left:495.0px;top:1420.9px;font-size:28px;line-height:36px;color:#595959;letter-spacing:0.01px;">Previous</div>
<div style="left:2338px;top:1406px;width:124px;height:64px;border-radius:8px;background:#448ef7;box-shadow:0 4px 0 rgba(0,0,0,.045)"></div>
<div class="t" style="left:2371.6px;top:1420.9px;font-size:28px;line-height:36px;color:#fff;letter-spacing:0.04px;">Next</div>
</div>
</body></html>
